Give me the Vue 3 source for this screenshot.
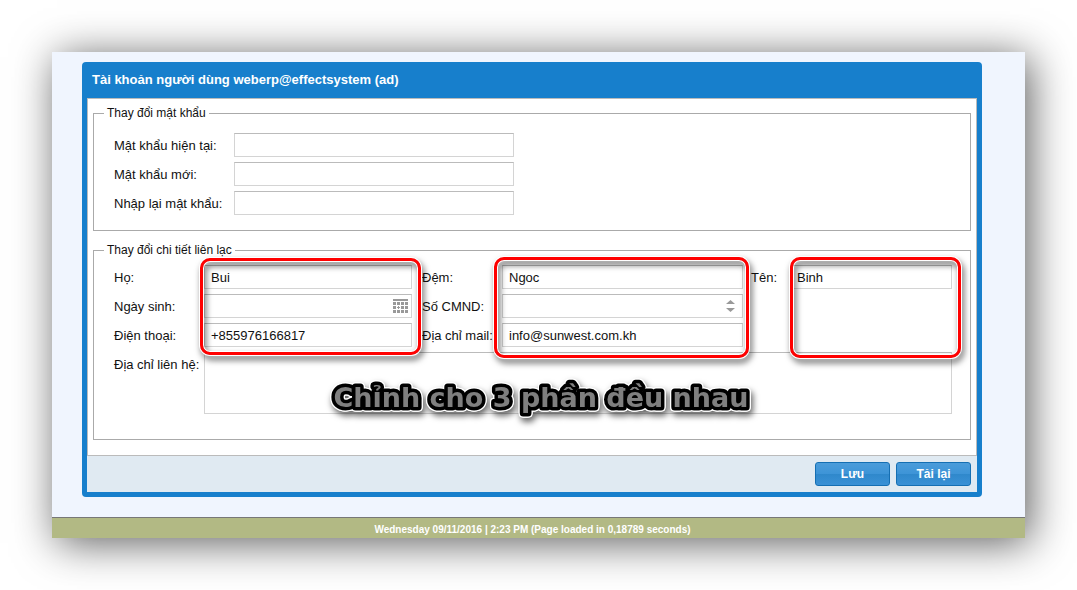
<script setup>
import { reactive } from 'vue'

const passwords = [
  { id: 'current', label: 'Mật khẩu hiện tại:' },
  { id: 'new', label: 'Mật khẩu mới:' },
  { id: 'repeat', label: 'Nhập lại mật khẩu:' }
]

const contact = reactive({
  ho: 'Bui',
  dem: 'Ngoc',
  ten: 'Binh',
  birthday: '',
  idCard: '',
  phone: '+855976166817',
  mail: 'info@sunwest.com.kh',
  address: ''
})
</script>

<template>
  <div class="page">
    <main class="sheet">
      <form class="panel" @submit.prevent>
        <h1 class="title">Tài khoản người dùng weberp@effectsystem (ad)</h1>

        <div class="body">
          <fieldset class="group">
            <legend>Thay đổi mật khẩu</legend>
            <div class="passwords">
              <div v-for="p in passwords" :key="p.id" class="row">
                <label :for="p.id">{{ p.label }}</label>
                <input :id="p.id" class="field" type="password" autocomplete="off" />
              </div>
            </div>
          </fieldset>

          <fieldset class="group">
            <legend>Thay đổi chi tiết liên lạc</legend>
            <div class="contact">
              <label class="r1 c1" for="ho">Họ:</label>
              <input id="ho" v-model="contact.ho" class="field r1 c2" type="text" />
              <label class="r1 c3" for="dem">Đệm:</label>
              <input id="dem" v-model="contact.dem" class="field r1 c4" type="text" />
              <label class="r1 c5" for="ten">Tên:</label>
              <input id="ten" v-model="contact.ten" class="field r1 c6" type="text" />

              <label class="r2 c1" for="birthday">Ngày sinh:</label>
              <div class="field combo r2 c2">
                <input id="birthday" v-model="contact.birthday" type="text" />
                <button type="button" aria-label="Chọn ngày">
                  <svg width="15" height="14" viewBox="0 0 15 14" fill="#999" shape-rendering="crispEdges">
                    <path d="M0 0h15v2H0zM0 3h3v3H0zM4 3h3v3H4zM8 3h3v3H8zM12 3h3v3h-3zM0 7h3v3H0zM5 7h1v1h1v1H6v1H5V9H4V8h1zM8 7h3v3H8zM12 7h3v3h-3zM0 11h3v3H0zM4 11h3v3H4zM8 11h3v3H8zM12 11h3v3h-3z" />
                  </svg>
                </button>
              </div>
              <label class="r2 c3" for="idCard">Số CMND:</label>
              <div class="field combo spin r2 c4">
                <input id="idCard" v-model="contact.idCard" type="text" />
                <button type="button" aria-label="Tăng hoặc giảm">
                  <svg width="9" height="12" viewBox="0 0 9 12" fill="#999">
                    <path d="M0 4 4.5 0 9 4zM0 8h9l-4.5 4z" />
                  </svg>
                </button>
              </div>

              <label class="r3 c1" for="phone">Điện thoại:</label>
              <input id="phone" v-model="contact.phone" class="field r3 c2" type="text" />
              <label class="r3 c3" for="mail">Địa chỉ mail:</label>
              <input id="mail" v-model="contact.mail" class="field r3 c4" type="text" />

              <label class="r4 c1" for="address">Địa chỉ liên hệ:</label>
              <textarea id="address" v-model="contact.address" class="field r4 address"></textarea>

              <div class="mark mark-a"></div>
              <div class="mark mark-b"></div>
              <div class="mark mark-c"></div>
              <svg class="note" width="420" height="30">
                <text x="50%" y="24" text-anchor="middle">Chỉnh cho 3 phần đều nhau</text>
              </svg>
            </div>
          </fieldset>
        </div>

        <div class="actions">
          <button type="submit">Lưu</button>
          <button type="button">Tải lại</button>
        </div>
      </form>

      <footer class="status">Wednesday 09/11/2016 | 2:23 PM (Page loaded in 0,18789 seconds)</footer>
    </main>
  </div>
</template>

<style>
body {
  background: #fff;
}
</style>

<style scoped>
.page {
  box-sizing: border-box;
  min-height: 100vh;
  padding: 52px;
  overflow: hidden;
  font: 13px/24px "Liberation Sans", Arial, sans-serif;
  color: #111;
}
.sheet {
  background: #f0f5fe;
  box-shadow: 5px 5px 40px rgba(0, 0, 0, 0.64);
  display: flow-root;
}
.panel {
  margin: 10px 43px 20px 30px;
  padding: 0 5px 5px;
  border-radius: 4px;
  background: #177fcc;
}
.title {
  margin: 0;
  padding: 0 5px;
  font-size: 13px;
  line-height: 36px;
  color: #fff;
}
.body {
  padding: 7px 5px 15px;
  border: 1px solid #bbb;
  background: #fff;
}
.group {
  margin: 0;
  min-width: 0;
  padding: 13px 18px 15px 10px;
  border: 1px solid #aaa;
}
.group + .group {
  margin-top: 12px;
  padding-top: 8px;
  padding-bottom: 25px;
}
legend {
  padding: 0 3px;
  font-size: 12px;
  line-height: 14px;
}
.passwords {
  display: flex;
  flex-direction: column;
  gap: 5px;
  padding-left: 10px;
}
.row {
  display: grid;
  grid-template-columns: 120px minmax(0, 280px);
}
.field {
  box-sizing: border-box;
  width: 100%;
  min-width: 0;
  height: 24px;
  margin: 0;
  padding: 2px 6px 0;
  border: 1px solid #d4d4d4;
  border-top-color: #bbb;
  border-radius: 0;
  background: #fff;
  font: inherit;
  color: inherit;
  outline: none;
}
.contact {
  display: grid;
  grid-template-columns: 90px minmax(0, 208fr) 90px minmax(0, 241fr) 47px minmax(0, 162fr);
  grid-auto-rows: minmax(24px, auto);
  row-gap: 5px;
  padding-left: 10px;
}
label {
  height: 24px;
  line-height: 26px;
  white-space: nowrap;
}
.r1 { grid-row: 1; }
.r2 { grid-row: 2; }
.r3 { grid-row: 3; }
.r4 { grid-row: 4; }
.c1 { grid-column: 1; }
.c2 { grid-column: 2; }
.c3 { grid-column: 3; padding-left: 10px; }
.c4 { grid-column: 4; }
.c5 { grid-column: 5; padding-left: 8px; }
.c6 { grid-column: 6; }
.combo {
  display: flex;
  align-items: center;
  padding: 0 3px 0 6px;
}
.spin {
  padding-right: 7px;
}
.combo input {
  flex: 1;
  min-width: 0;
  padding: 0;
  border: 0;
  background: none;
  font: inherit;
  outline: none;
}
.combo button {
  display: flex;
  padding: 0;
  border: 0;
  background: none;
}
.address {
  grid-column: 2 / 7;
  height: 62px;
  resize: none;
}
.mark {
  z-index: 1;
  border: 3px solid #f00;
  border-radius: 10px;
  box-shadow: 0 0 0 1px #fff, inset 0 0 0 1px #fff;
  filter: drop-shadow(2px 4px 3px rgba(0, 0, 0, 0.6));
  pointer-events: none;
}
.mark-a {
  grid-area: 1 / 2 / 4 / 3;
  margin: -7px -9px -8px -4px;
}
.mark-b {
  grid-area: 1 / 4 / 4 / 5;
  margin: -8px -6px -11px -8px;
}
.mark-c {
  grid-area: 1 / 6 / 4 / 7;
  margin: -8px -9px -11px 0;
}
.note {
  grid-area: 4 / 2 / 5 / 7;
  place-self: center;
  z-index: 2;
  margin: 30px 75px 0 0;
  overflow: visible;
  font: bold 27px/30px "DejaVu Sans", Verdana, sans-serif;
  fill: #7f7f7f;
  stroke: #000;
  stroke-width: 7px;
  stroke-linejoin: round;
  paint-order: stroke fill;
  filter: drop-shadow(1px 0 0 #fff) drop-shadow(-1px 0 0 #fff) drop-shadow(0 1px 0 #fff) drop-shadow(0 -1px 0 #fff) drop-shadow(2px 4px 3px rgba(0, 0, 0, 0.6));
  pointer-events: none;
}
.actions {
  display: flex;
  justify-content: flex-end;
  gap: 6px;
  padding: 6px;
  background: #e0eaf2;
}
.actions button {
  width: 75px;
  height: 24px;
  padding: 0;
  border: 1px solid #156fb3;
  border-radius: 3px;
  background: linear-gradient(#4b9cda, #3d94d7 50%, #2f88cb 50%, #3a91d6);
  font: bold 12px/22px "Liberation Sans", Arial, sans-serif;
  color: #fff;
}
.status {
  padding: 3px 12px 0 0;
  border-top: 1px solid #777;
  background: #b2b984;
  font-size: 10px;
  font-weight: bold;
  line-height: 17px;
  text-align: center;
  color: #fff;
}
</style>
